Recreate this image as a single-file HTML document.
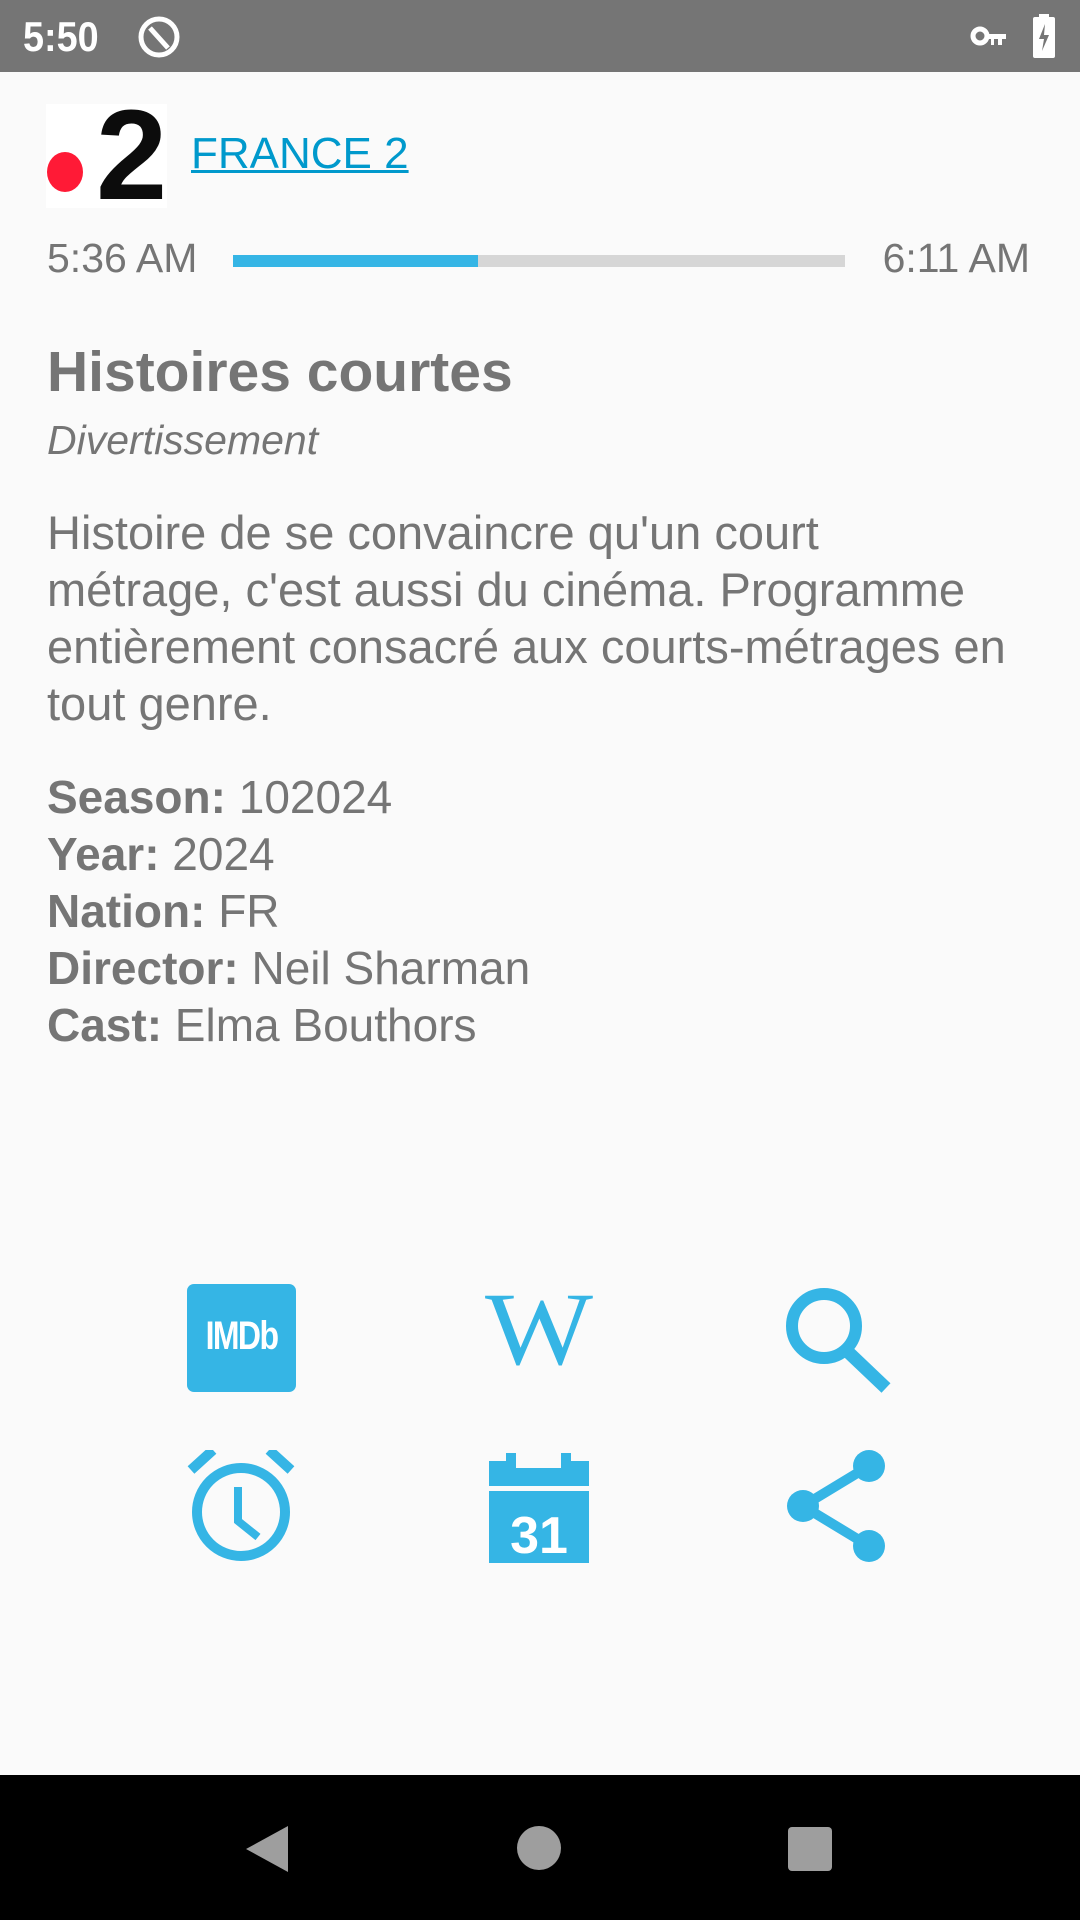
<!DOCTYPE html>
<html><head><meta charset="utf-8"><style>
body{margin:0;width:1080px;height:1920px;background:#fafafa;font-family:"Liberation Sans",Roboto,sans-serif;color:#757575;position:relative;overflow:hidden}
.a{position:absolute;white-space:nowrap}
</style></head><body>
<div class="a" style="left:0;top:0;width:1080px;height:72px;background:#757575"></div>
<div class="a" style="left:23px;top:13px;font-size:42px;color:#fff;font-weight:bold;transform:scaleX(.9);transform-origin:left">5:50</div>
<svg class="a" style="left:136px;top:14px" width="46" height="46" viewBox="0 0 46 46"><circle cx="23" cy="23" r="18" fill="none" stroke="#fff" stroke-width="5"/><path d="M14 14 L32 34" stroke="#fff" stroke-width="5"/></svg>
<svg class="a" style="left:970px;top:22px" width="38" height="28" viewBox="0 0 38 28"><circle cx="10" cy="14" r="7" fill="none" stroke="#fff" stroke-width="5"/><path d="M16 12h20v5h-4v6h-4v-6h-4v6h-3v-6h-5z" fill="#fff"/></svg>
<svg class="a" style="left:1032px;top:14px" width="24" height="44" viewBox="0 0 24 44"><rect x="7" y="0" width="10" height="4" fill="#fff"/><rect x="1" y="3" width="22" height="41" rx="2" fill="#fff"/><path d="M13 10 L7 25 h5 l-2 12 l7 -16 h-5z" fill="#757575"/></svg>

<div class="a" style="left:46px;top:104px;width:121px;height:104px;background:#fff"></div>
<div class="a" style="left:96px;top:92px;font-size:128px;font-weight:bold;color:#0c0c0c;line-height:1;letter-spacing:-4px">2</div>
<div class="a" style="left:47px;top:152px;width:36px;height:40px;border-radius:50%;background:#ff1a36"></div>
<div class="a" style="left:191px;top:129px;font-size:44px;color:#0099cc;text-decoration:underline;text-decoration-thickness:3px">FRANCE 2</div>

<div class="a" style="left:47px;top:235px;font-size:41px">5:36 AM</div>
<div class="a" style="left:233px;top:255px;width:612px;height:12px;background:#d6d6d6"></div>
<div class="a" style="left:233px;top:255px;width:245px;height:12px;background:#35b5e5"></div>
<div class="a" style="right:50px;top:235px;font-size:41px">6:11 AM</div>

<div class="a" style="left:47px;top:339px;font-size:57px;font-weight:bold">Histoires courtes</div>
<div class="a" style="left:47px;top:417px;font-size:41px;font-style:italic">Divertissement</div>
<div class="a" style="left:47px;top:504px;font-size:47px;line-height:57px">Histoire de se convaincre qu'un court<br>métrage, c'est aussi du cinéma. Programme<br>entièrement consacré aux courts-métrages en<br>tout genre.</div>
<div class="a" style="left:47px;top:769px;font-size:46px;line-height:57px"><b>Season:</b> 102024<br><b>Year:</b> 2024<br><b>Nation:</b> FR<br><b>Director:</b> Neil Sharman<br><b>Cast:</b> Elma Bouthors</div>

<div class="a" style="left:187px;top:1284px;width:109px;height:108px;background:#35b5e5;border-radius:7px"></div>
<div class="a" style="left:187px;top:1314px;width:109px;text-align:center;font-size:40px;font-weight:bold;color:#fff;letter-spacing:-2px;transform:scaleX(.8)">IMDb</div>
<div class="a" style="left:484px;top:1278px;width:110px;text-align:center;font-family:'Liberation Serif',serif;font-size:104px;color:#35b5e5;line-height:1;transform:scaleX(1.1)">W</div>
<svg class="a" style="left:780px;top:1284px" width="112" height="112" viewBox="0 0 112 112"><ellipse cx="44" cy="42" rx="32" ry="32" fill="none" stroke="#35b5e5" stroke-width="12"/><path d="M66 66 L106 104" stroke="#35b5e5" stroke-width="13"/></svg>
<svg class="a" style="left:185px;top:1450px" width="112" height="112" viewBox="0 0 112 112"><circle cx="56" cy="62" r="44" fill="none" stroke="#35b5e5" stroke-width="10"/><path d="M53 37v34l20 16" fill="none" stroke="#35b5e5" stroke-width="8"/><path d="M6 20 L28 0 M106 20 L84 0" stroke="#35b5e5" stroke-width="10"/></svg>
<svg class="a" style="left:489px;top:1453px" width="100" height="110" viewBox="0 0 100 110"><rect x="0" y="8" width="100" height="25" fill="#35b5e5"/><rect x="17" y="0" width="10" height="15" fill="#35b5e5"/><rect x="72" y="0" width="10" height="15" fill="#35b5e5"/><rect x="27" y="8" width="45" height="7" fill="#fafafa"/><rect x="0" y="38" width="100" height="72" fill="#35b5e5"/><text x="50" y="100" text-anchor="middle" font-family="Liberation Sans" font-weight="bold" font-size="52" fill="#fff">31</text></svg>
<svg class="a" style="left:785px;top:1450px" width="110" height="112" viewBox="0 0 110 112"><path d="M18 56 L84 16 M18 56 L84 96" stroke="#35b5e5" stroke-width="10"/><circle cx="84" cy="16" r="16" fill="#35b5e5"/><circle cx="18" cy="56" r="16" fill="#35b5e5"/><circle cx="84" cy="96" r="16" fill="#35b5e5"/></svg>

<div class="a" style="left:0;top:1775px;width:1080px;height:145px;background:#000"></div>
<svg class="a" style="left:242px;top:1824px" width="48" height="50" viewBox="0 0 48 50"><path d="M46 2 V48 L4 25z" fill="#9e9e9e"/></svg>
<div class="a" style="left:517px;top:1826px;width:44px;height:44px;border-radius:50%;background:#9e9e9e"></div>
<div class="a" style="left:788px;top:1827px;width:44px;height:44px;border-radius:4px;background:#9e9e9e"></div>
</body></html>
